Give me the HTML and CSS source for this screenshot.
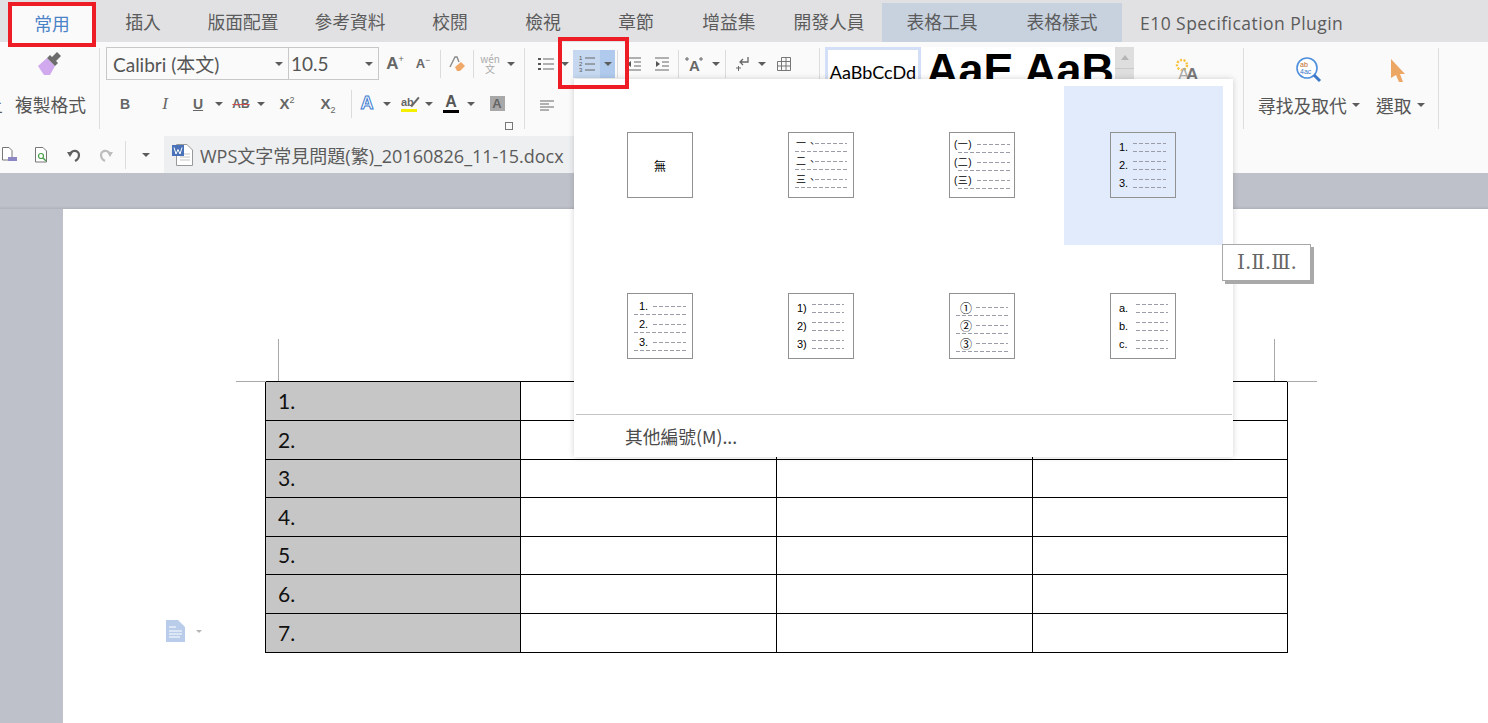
FILE: index.html
```html
<!DOCTYPE html>
<html lang="zh-Hant">
<head>
    <meta charset="UTF-8">
    <title>WPS文字常見問題</title>
    <link rel="stylesheet" href="styles.css">
</head>
<body>
    <div class="tabs">
        <div class="tab tab-home">常用</div>
        <div class="tab t94">插入</div>
        <div class="tab t106">版面配置</div>
        <div class="tab t108">參考資料</div>
        <div class="tab t92">校閱</div>
        <div class="tab t94">檢視</div>
        <div class="tab t92">章節</div>
        <div class="tab t94">增益集</div>
        <div class="tab t106">開發人員</div>
        <div class="tab t120 tab-table">表格工具</div>
        <div class="tab t120 tab-table">表格樣式</div>
        <div class="tab tab-plugin">E10 Specification Plugin</div>
    </div>

    <div class="ribbon">
        <!-- clipboard -->
        <div class="group g-clip">
            <svg class="brush" width="26" height="24" viewBox="0 0 26 24">
                <path d="M1 14 L10 6 L18 14 L13 23 L7 23 Z" fill="#d0a9ef"/>
                <path d="M10 6 L13 3 L15 5 L20 0 L24 4 L19 9 L21 11 L18 14 Z" fill="#6d6d6d"/>
            </svg>
            <div class="clip-label"><span class="clip-cut">上</span>複製格式</div>
        </div>

        <!-- font -->
        <div class="group g-font">
            <div class="font-row1">
                <div class="combo combo-name"><span>Calibri (本文)</span><i class="arrow"></i></div>
                <div class="combo combo-size"><span>10.5</span><i class="arrow"></i></div>
                <div class="tool tool-a">A<sup>+</sup></div>
                <div class="tool tool-a small">A<sup>−</sup></div>
                <i class="vsep"></i>
                <svg class="eraser" width="18" height="18" viewBox="0 0 18 18">
                    <path d="M2 12 L7 2 L9 2 L11 7" fill="none" stroke="#8a8a8a" stroke-width="1.4"/>
                    <path d="M7 12 L13 7 L17 11 L12 16 L9 16 Z" fill="#f0a868"/>
                </svg>
                <i class="vsep"></i>
                <div class="tool-wen"><span>wén</span><span>文</span></div>
                <i class="arrow"></i>
            </div>
            <div class="font-row2">
                <div class="tool fmt-b">B</div>
                <div class="tool fmt-i">I</div>
                <div class="tool fmt-u">U</div>
                <i class="arrow"></i>
                <div class="tool fmt-s">AB</div>
                <i class="arrow"></i>
                <div class="tool fmt-x">X<sup>2</sup></div>
                <div class="tool fmt-x">X<sub>2</sub></div>
                <i class="vsep short"></i>
                <div class="tool fmt-outline">A</div>
                <i class="arrow"></i>
                <div class="tool fmt-hl">ab</div>
                <i class="arrow"></i>
                <div class="tool fmt-color">A</div>
                <i class="arrow"></i>
                <div class="tool fmt-shade">A</div>
            </div>
            <i class="launcher"></i>
        </div>

        <!-- paragraph -->
        <div class="group g-para">
            <div class="para-row1">
                <svg width="16" height="14" viewBox="0 0 16 14">
                    <path d="M5 2 H16 M5 7 H16 M5 12 H16" stroke="#666" stroke-width="1"/>
                    <path d="M0 1 h3 v2 h-3 Z M0 6 h3 v2 h-3 Z M0 11 h3 v2 h-3 Z" fill="#555"/>
                </svg>
                <i class="arrow arrow-list"></i>
                <div class="num-btn">
                    <div class="num-main">
                        <svg width="16" height="18" viewBox="0 0 16 18">
                            <path d="M6 3 H16 M6 9 H16 M6 15 H16" stroke="#666" stroke-width="1"/>
                            <text x="0" y="5" class="mini">1</text>
                            <text x="0" y="11" class="mini">2</text>
                            <text x="0" y="17" class="mini">3</text>
                        </svg>
                    </div>
                    <div class="num-drop"><i class="arrow"></i></div>
                </div>
                <i class="vsep"></i>
                <svg width="14" height="14" viewBox="0 0 14 14">
                    <path d="M0 1 H14 M7 5 H14 M7 9 H14 M0 13 H14" stroke="#666" stroke-width="1"/>
                    <path d="M0 7 L4 4 V10 Z" fill="#555"/>
                </svg>
                <svg width="14" height="14" viewBox="0 0 14 14">
                    <path d="M0 1 H14 M7 5 H14 M7 9 H14 M0 13 H14" stroke="#666" stroke-width="1"/>
                    <path d="M5 7 L1 4 V10 Z" fill="#555"/>
                </svg>
                <i class="vsep"></i>
                <svg class="para-case" width="18" height="16" viewBox="0 0 18 16">
                    <text x="4" y="15" class="case-a">A</text>
                    <path d="M0 3 H4 M2 1 V5 M14 3 H18 M16 1 V5" stroke="#666"/>
                </svg>
                <i class="arrow arrow-case"></i>
                <i class="vsep"></i>
                <svg class="para-enter" width="14" height="16" viewBox="0 0 14 16">
                    <path d="M12 1 V6 H5 M7 3 L4 6 L7 9" fill="none" stroke="#666" stroke-width="1.3"/>
                    <path d="M0 12 H5 M2.5 10 V15" stroke="#666" stroke-width="1"/>
                </svg>
                <i class="arrow arrow-enter"></i>
                <svg width="14" height="14" viewBox="0 0 14 14">
                    <path d="M4.500 .5 H13.500 V13.500 H.5 V4.500 H13.500 M.5 9 H13.500 M4.500 .5 V13.500 M9 .5 V13.500" fill="none" stroke="#777"/>
                </svg>
            </div>
            <div class="para-row2">
                <svg width="14" height="12" viewBox="0 0 14 12">
                    <path d="M0 1 H14 M0 4 H9 M0 7 H14 M0 10 H9" stroke="#666"/>
                </svg>
            </div>
        </div>

        <!-- styles -->
        <div class="group g-style">
            <div class="style-first">AaBbCcDd</div>
            <div class="style-big">AaE</div>
            <div class="style-big style-next">AaB</div>
            <div class="style-scroll"><div class="scroll-up"><i class="arrow arrow-up"></i></div></div>
        </div>

        <div class="group g-new">
            <svg width="30" height="24" viewBox="0 0 30 24">
                <circle cx="7" cy="7" r="5" fill="none" stroke="#f8c23c" stroke-width="2.400" stroke-dasharray="2 1.500"/>
                <text x="3" y="22" class="aa aa-thin">A</text>
                <text x="11" y="22" class="aa">A</text>
            </svg>
        </div>

        <div class="group g-find">
            <div class="find-item find-replace">
                <svg width="26" height="26" viewBox="0 0 26 26">
                    <circle cx="11" cy="11" r="10" fill="#fff" stroke="#4f8fdc" stroke-width="1.600"/>
                    <path d="M18 18 L24 24" stroke="#3b78c8" stroke-width="3"/>
                    <text x="4" y="10" class="mini mini-or">ab</text>
                    <text x="4" y="17" class="mini mini-bl">4ac</text>
                </svg>
                <div class="find-label">尋找及取代<i class="arrow"></i></div>
            </div>
            <div class="find-item find-select">
                <svg width="16" height="24" viewBox="0 0 16 24">
                    <path d="M1 0 L15 15 L10 15 L13 23 L9 23 L6 16 L1 19 Z" fill="#eca765"/>
                </svg>
                <div class="find-label">選取<i class="arrow"></i></div>
            </div>
        </div>
    </div>

    <div class="quick">
        <svg width="16" height="16" viewBox="0 0 16 16">
            <path d="M.5 .5 H7 L10 3.500 V13 H.5 Z" fill="#fff" stroke="#777"/>
            <path d="M6 10 H15 V14 H6 Z" fill="#8d86c4"/>
        </svg>
        <svg width="16" height="16" viewBox="0 0 16 16">
            <path d="M1.500 .5 H9 L12.500 4 V15 H1.500 Z" fill="#fff" stroke="#777"/>
            <circle cx="7" cy="9" r="2.500" fill="none" stroke="#4aa04a" stroke-width="1.200"/>
            <path d="M9 11 L12 14" stroke="#4aa04a" stroke-width="1.400"/>
        </svg>
        <svg width="16" height="16" viewBox="0 0 16 16">
            <path d="M4 8 C4 3 13 2 13 8 C13 11 11 13 9 14" fill="none" stroke="#5f5f5f" stroke-width="2.200"/>
            <path d="M1 5 L7 5 L4 10 Z" fill="#5f5f5f"/>
        </svg>
        <svg width="16" height="16" viewBox="0 0 16 16">
            <path d="M12 8 C12 3 3 2 3 8 C3 11 5 13 7 14" fill="none" stroke="#bdbdbd" stroke-width="2.200"/>
            <path d="M15 5 L9 5 L12 10 Z" fill="#bdbdbd"/>
        </svg>
        <i class="vsep quick-sep"></i>
        <i class="arrow"></i>
        <div class="doc-tab">
            <svg width="21" height="22" viewBox="0 0 21 22">
                <path d="M4.500 .5 H15 L20.500 6 V21.500 H4.500 Z" fill="#fff" stroke="#999"/>
                <path d="M8 10 H18 M8 13 H18 M8 16 H18" stroke="#c4c4c4"/>
                <rect x="0" y="1" width="12" height="11" fill="#4a72b8"/>
                <path d="M2 3.500 L4 10 L6 5.500 L8 10 L10 3.500" fill="none" stroke="#fff"/>
            </svg>
            <span>WPS文字常見問題(繁)_20160826_11-15.docx</span>
        </div>
    </div>

    <div class="workspace">
        <div class="page">
            <i class="crop crop-v crop-tl"></i>
            <i class="crop crop-h crop-hl"></i>
            <i class="crop crop-v crop-tr"></i>
            <i class="crop crop-h crop-hr"></i>
            <div class="side-note">
                <svg width="20" height="22" viewBox="0 0 20 22">
                    <path d="M0 0 H12 L19 7 V22 H0 Z" fill="#b9cdea"/>
                    <path d="M3 7 H10 M3 11 H16 M3 14 H16 M3 17 H14" stroke="#fff" stroke-width="1.200"/>
                </svg>
                <i class="arrow arrow-note"></i>
            </div>
            <table class="doc-table">
                <tr><td>1.</td><td></td><td></td><td></td></tr>
                <tr><td>2.</td><td></td><td></td><td></td></tr>
                <tr><td>3.</td><td></td><td></td><td></td></tr>
                <tr><td>4.</td><td></td><td></td><td></td></tr>
                <tr><td>5.</td><td></td><td></td><td></td></tr>
                <tr><td>6.</td><td></td><td></td><td></td></tr>
                <tr><td>7.</td><td></td><td></td><td></td></tr>
            </table>
        </div>
    </div>

    <!-- numbering dropdown -->
    <div class="popup">
        <div class="cells">
            <div class="cell">
                <div class="thumb thumb-none">無</div>
            </div>
            <div class="cell">
                <div class="thumb t-cn">
                    <div class="tr"><span class="lb">一、</span><i class="dash d1"></i></div><i class="dash d2"></i>
                    <div class="tr"><span class="lb">二、</span><i class="dash d1"></i></div><i class="dash d2"></i>
                    <div class="tr"><span class="lb">三、</span><i class="dash d1"></i></div><i class="dash d2"></i>
                </div>
            </div>
            <div class="cell">
                <div class="thumb t-paren">
                    <div class="tr"><span class="lb">(一)</span><i class="dash d1"></i></div><i class="dash d2"></i>
                    <div class="tr"><span class="lb">(二)</span><i class="dash d1"></i></div><i class="dash d2"></i>
                    <div class="tr"><span class="lb">(三)</span><i class="dash d1"></i></div><i class="dash d2"></i>
                </div>
            </div>
            <div class="cell cell-on">
                <div class="thumb t-num">
                    <div class="tr"><span class="lb">1.</span><i class="dash d1"></i></div><i class="dash d2"></i>
                    <div class="tr"><span class="lb">2.</span><i class="dash d1"></i></div><i class="dash d2"></i>
                    <div class="tr"><span class="lb">3.</span><i class="dash d1"></i></div><i class="dash d2"></i>
                </div>
            </div>
            <div class="cell">
                <div class="thumb t-numw">
                    <div class="tr"><span class="lb">1.</span><i class="dash d1"></i></div><i class="dash d2"></i>
                    <div class="tr"><span class="lb">2.</span><i class="dash d1"></i></div><i class="dash d2"></i>
                    <div class="tr"><span class="lb">3.</span><i class="dash d1"></i></div><i class="dash d2"></i>
                </div>
            </div>
            <div class="cell">
                <div class="thumb t-close">
                    <div class="tr"><span class="lb">1)</span><i class="dash d1"></i></div><i class="dash d2"></i>
                    <div class="tr"><span class="lb">2)</span><i class="dash d1"></i></div><i class="dash d2"></i>
                    <div class="tr"><span class="lb">3)</span><i class="dash d1"></i></div><i class="dash d2"></i>
                </div>
            </div>
            <div class="cell">
                <div class="thumb t-circle">
                    <div class="tr"><span class="lb">①</span><i class="dash d1"></i></div><i class="dash d2"></i>
                    <div class="tr"><span class="lb">②</span><i class="dash d1"></i></div><i class="dash d2"></i>
                    <div class="tr"><span class="lb">③</span><i class="dash d1"></i></div><i class="dash d2"></i>
                </div>
            </div>
            <div class="cell">
                <div class="thumb t-alpha">
                    <div class="tr"><span class="lb">a.</span><i class="dash d1"></i></div><i class="dash d2"></i>
                    <div class="tr"><span class="lb">b.</span><i class="dash d1"></i></div><i class="dash d2"></i>
                    <div class="tr"><span class="lb">c.</span><i class="dash d1"></i></div><i class="dash d2"></i>
                </div>
            </div>
        </div>
        <div class="popup-more">其他編號(M)...</div>
    </div>

    <div class="tooltip">Ⅰ.Ⅱ.Ⅲ.</div>
    <div class="mark mark-num"></div>
</body>
</html>
```

FILE: styles.css
```css
* {
    box-sizing: border-box;
}
html, body {
    height: 100%;
}
body {
    margin: 0;
    overflow: hidden;
    position: relative;
    background: #bfc1ca;
    color: #555;
    font-family: "Noto Sans CJK TC", "Noto Sans", sans-serif;
}
i {
    display: block;
    font-style: normal;
}

/* shared bits */
.arrow {
    width: 0;
    height: 0;
    flex: none;
    border-left: 4px solid transparent;
    border-right: 4px solid transparent;
    border-top: 4px solid #5c5c5c;
}
.arrow-up {
    border-top: 0;
    border-bottom: 5px solid #b5b5b5;
}
.vsep {
    width: 1px;
    height: 28px;
    flex: none;
    background: #dcdcdc;
}
.mini {
    font-family: "Liberation Sans", sans-serif;
    font-size: 6px;
    fill: #555;
}
.mini-or {
    font-size: 7px;
    fill: #c0672a;
}
.mini-bl {
    font-size: 7px;
    fill: #3b78c8;
}

/* tab strip */
.tabs {
    display: flex;
    height: 42px;
    padding-left: 8px;
    background: #e1e1e3;
}
.tab {
    display: flex;
    align-items: center;
    justify-content: center;
    font-size: 17.750px;
    color: #5b5b5b;
}
.t92 { width: 92px; }
.t94 { width: 94px; }
.t106 { width: 106px; }
.t108 { width: 108px; }
.t120 { width: 120px; }
.tab-home {
    width: 88px;
    height: 45px;
    margin-top: 2px;
    padding-bottom: 3px;
    background: #fafafa;
    border: 4px solid #ee1c25;
    color: #4a82c8;
    position: relative;
    z-index: 3;
}
.tab-table {
    height: 39px;
    margin-top: 3px;
    padding-bottom: 3px;
    background: #c8d2df;
}
.tab-plugin {
    padding: 3px 0 0 18px;
    font-family: "Open Sans", sans-serif;
    font-size: 17.500px;
    letter-spacing: 0.450px;
}

/* ribbon */
.ribbon {
    display: flex;
    height: 94px;
    background: #fafafa;
}
.group {
    flex: none;
    height: 81px;
    margin-top: 6px;
    position: relative;
}
.g-clip {
    width: 100px;
    border-right: 1px solid #dedede;
    display: flex;
    flex-direction: column;
    align-items: center;
}
.brush {
    margin: 4px 0 0 1px;
}
.clip-label {
    width: 99px;
    margin-top: 16px;
    font-size: 17.750px;
    line-height: 24px;
    white-space: nowrap;
    overflow: hidden;
    padding-left: 15px;
    position: relative;
}
.clip-cut {
    position: absolute;
    left: -15px;
}

.g-font {
    width: 425px;
    padding-left: 6px;
    border-right: 1px solid #dedede;
}
.font-row1 {
    display: flex;
    align-items: center;
    height: 33px;
    margin-top: -1px;
}
.combo {
    display: flex;
    align-items: center;
    justify-content: space-between;
    height: 33px;
    padding: 0 5px 0 6px;
    border: 1px solid #c8c8c8;
    font-family: Lato, "Noto Sans CJK TC", sans-serif;
    font-size: 19px;
    color: #555;
}
.combo-name {
    width: 183px;
}
.combo-size {
    width: 91px;
    margin-left: -1px;
    padding-left: 2px;
}
.tool {
    font-family: "Liberation Sans", sans-serif;
    font-weight: 700;
    color: #666;
}
.tool sup, .tool sub {
    font-size: 9px;
    font-weight: 400;
    line-height: 0;
}
.tool-a {
    width: 28px;
    font-size: 17px;
    text-align: center;
    margin-left: 2px;
    margin-right: -2px;
}
.tool-a.small {
    font-size: 13px;
    margin-right: -1px;
}
.font-row1 .vsep {
    margin: 0 7px 0 4px;
}
.eraser {
    margin-right: 3px;
}
.tool-wen {
    width: 28px;
    display: flex;
    flex-direction: column;
    align-items: center;
    margin: 0 3px 0 -5px;
    font-size: 10px;
    line-height: 10px;
    color: #aaa;
}
.font-row2 {
    display: grid;
    grid-template-columns: 38px 42px 24px 18px 26px 14px 38px 44px 3px 28px 12px 32px 8px 36px 4px 48px;
    place-items: center;
    height: 33px;
    margin-top: 7px;
}
.fmt-b { font-size: 14px; }
.fmt-i {
    font-family: "Liberation Serif", serif;
    font-style: italic;
    font-weight: 400;
    font-size: 17px;
}
.fmt-u {
    font-size: 14px;
    text-decoration: underline;
}
.fmt-s {
    font-size: 12px;
    text-decoration: line-through;
    text-decoration-color: #d05050;
}
.fmt-x { font-size: 15px; }
.fmt-outline {
    font-size: 18px;
    color: #fff;
    -webkit-text-stroke: 1px #3d7bd0;
}
.fmt-hl {
    position: relative;
    width: 16px;
    padding-right: 4px;
    font-size: 11px;
    line-height: 13px;
    text-align: center;
    border-bottom: 3px solid #f6f000;
}
.fmt-hl::after {
    content: "";
    position: absolute;
    right: 1px;
    top: 0;
    width: 2px;
    height: 12px;
    background: #666;
    transform: rotate(40deg);
}
.fmt-color {
    width: 16px;
    font-size: 16px;
    line-height: 16px;
    text-align: center;
    color: #555;
    border-bottom: 3px solid #000;
}
.fmt-shade {
    width: 15px;
    height: 15px;
    font-size: 13px;
    line-height: 15px;
    text-align: center;
    background: #a8a8a8;
    color: #666;
}
.launcher {
    position: absolute;
    left: 405px;
    top: 74px;
    width: 8px;
    height: 8px;
    border: 1px solid #777;
}

.g-para {
    width: 295px;
    border-right: 1px solid #dedede;
    padding-left: 13px;
}
.para-row1 {
    display: flex;
    align-items: center;
    height: 28px;
    margin-top: 2px;
}
.arrow-list {
    margin: 0 4px 0 7px;
}
.num-btn {
    display: flex;
    width: 42px;
    height: 28px;
    flex: none;
    margin-left: 0;
}
.num-main {
    width: 27px;
    background: #c5d8f0;
    display: flex;
    align-items: center;
    justify-content: center;
}
.num-drop {
    width: 15px;
    background: #afcaec;
    display: flex;
    align-items: center;
    justify-content: center;
}
.para-row1 > .vsep {
    margin: 0 9px;
}
.para-row1 > .num-btn + .vsep {
    margin-left: 2px;
}
.para-row1 > .arrow-case + .vsep {
    margin-left: 0;
}
.para-row1 > svg + svg {
    margin-left: 14px;
}
.para-case {
    margin-left: -3px;
}
.case-a {
    font-family: "Liberation Sans", sans-serif;
    font-weight: 700;
    font-size: 15px;
    fill: #666;
}
.arrow-case {
    margin: 0 5px 0 9px;
}
.para-enter {
    margin-left: 1px;
}
.arrow-enter {
    margin: 0 11px 0 8px;
}
.para-row2 {
    margin-top: 15px;
    padding-left: 2px;
}

.g-style {
    width: 315px;
    margin-top: 5px;
    display: flex;
    padding-left: 5px;
    overflow: hidden;
}
.style-first {
    width: 96px;
    height: 40px;
    flex: none;
    padding-top: 11px;
    background: #fff;
    border: 3px solid #d3dff6;
    border-bottom: 0;
    font-family: Lato, sans-serif;
    font-size: 18px;
    line-height: 22px;
    text-align: center;
    color: #000;
    white-space: nowrap;
}
.style-big {
    width: 97px;
    height: 40px;
    flex: none;
    padding-left: 5px;
    background: #fff;
    font-family: "Liberation Sans", sans-serif;
    font-weight: 700;
    font-size: 45px;
    line-height: 46px;
    color: #000;
    overflow: hidden;
}
.style-next {
    padding-left: 6px;
}
.style-scroll {
    width: 19px;
    height: 40px;
    flex: none;
    background: #dedede;
}
.scroll-up {
    height: 22px;
    border-bottom: 1px solid #c9c9c9;
    display: flex;
    align-items: center;
    justify-content: center;
}

.g-new {
    width: 109px;
    border-right: 1px solid #dedede;
    padding: 10px 0 0 40px;
}
.aa {
    font-family: "Liberation Sans", sans-serif;
    font-size: 17px;
    font-weight: 700;
    fill: #777;
}
.aa-thin {
    font-weight: 400;
    fill: #aaa;
}
.g-find {
    width: 195px;
    display: flex;
    padding-left: 14px;
    border-right: 1px solid #dedede;
}
.find-item {
    display: flex;
    flex-direction: column;
    align-items: center;
}
.find-replace {
    width: 105px;
}
.find-replace svg {
    margin: 9px 0 0 -3px;
}
.find-select {
    width: 50px;
    margin-left: 13px;
}
.find-select svg {
    margin: 11px 0 0 -7px;
}
.find-label {
    display: flex;
    align-items: center;
    gap: 5px;
    position: absolute;
    top: 45px;
    font-size: 17.750px;
    line-height: 24px;
    white-space: nowrap;
}
.find-replace .find-label { left: 14px; }
.find-select .find-label { left: 132px; }

/* quick access row */
.quick {
    display: flex;
    align-items: center;
    gap: 16px;
    height: 37px;
    padding-left: 2px;
    background: #fafafa;
}
.quick-sep {
    margin-left: -5px;
}
.doc-tab {
    display: flex;
    align-items: center;
    gap: 7px;
    width: 410px;
    height: 37px;
    margin-left: -2px;
    padding-left: 8px;
    background: #eeeff0;
    font-family: "Open Sans", "Noto Sans CJK TC", sans-serif;
    font-size: 18px;
    color: #5b5b5b;
    white-space: nowrap;
}

/* document */
.workspace {
    height: 550px;
    padding: 36px 0 0 63px;
    background: linear-gradient(#bfc1ca 33px, #b0b2bb 36px, #bfc1ca 36px);
}
.page {
    position: relative;
    height: 514px;
    padding: 172px 0 0 202px;
    background: #fff;
}
.crop {
    position: absolute;
    background: #a9a9a9;
}
.crop-v {
    width: 1px;
    height: 42px;
    top: 130px;
}
.crop-h {
    height: 1px;
    width: 30px;
    top: 172px;
}
.crop-tl { left: 215px; }
.crop-tr { left: 1211px; }
.crop-hl { left: 173px; }
.crop-hr { left: 1224px; }
.side-note {
    position: absolute;
    left: 103px;
    top: 411px;
    display: flex;
    align-items: center;
    gap: 10px;
}
.arrow-note {
    border-top-color: #b5b5b5;
    border-left-width: 3px;
    border-right-width: 3px;
    border-top-width: 3px;
}
.doc-table {
    width: 1023px;
    table-layout: fixed;
    border-collapse: collapse;
    font-family: Lato, sans-serif;
    font-size: 21px;
    color: #111;
}
.doc-table tr {
    height: 39px;
}
.doc-table tr:nth-child(3), .doc-table tr:nth-child(5) {
    height: 38px;
}
.doc-table td {
    width: 256px;
    padding: 0 0 2px 12px;
    border: 1px solid #000;
}
.doc-table td:first-child {
    width: 255px;
    background: #c6c6c6;
}
.doc-table td:last-child {
    width: 255px;
}

/* numbering popup */
.popup {
    position: absolute;
    left: 574px;
    top: 79px;
    width: 659px;
    height: 378px;
    padding: 7px 0 0 7px;
    background: #fff;
    box-shadow: 0 0 6px rgba(0, 0, 0, 0.18);
}
.cells {
    display: grid;
    grid-template-columns: repeat(4, 159px);
    grid-auto-rows: 159px;
    gap: 2px;
}
.cell {
    padding: 46px 0 0 46px;
}
.cell-on {
    background: #e2ebfc;
}
.thumb {
    width: 66px;
    height: 66px;
    padding-top: var(--top);
    border: 1px solid #919191;
    background: #fff;
    font-family: "Liberation Sans", "Noto Sans CJK TC", sans-serif;
    font-size: 11px;
    color: #000;
}
.cell-on .thumb {
    background: #e2ebfc;
}
.thumb-none {
    display: flex;
    align-items: center;
    justify-content: center;
    padding: 0;
    font-family: "Noto Sans CJK TC", sans-serif;
    font-size: 12px;
}
.tr {
    display: flex;
    height: 1px;
}
.lb {
    width: var(--d1);
    flex: none;
    padding-left: var(--lb);
    line-height: 1px;
    white-space: nowrap;
}
.dash {
    height: 1px;
    background: repeating-linear-gradient(90deg, #9a9ca8 0 4px, transparent 4px 6px);
}
.d1 {
    width: calc(var(--end) - var(--d1));
}
.d2 {
    margin: 7px 0 9px var(--d2);
    width: calc(var(--end) - var(--d2));
}
/* offsets inside the thumbnails, measured from inside the 1px border */
.t-cn { --top: 10px; --d1: 26px; --d2: 6px; --end: 58px; --lb: 7px; }
.t-paren { --top: 11px; --d1: 27px; --d2: 8px; --end: 60px; --lb: 4px; }
.t-num { --top: 10px; --d1: 22px; --d2: 22px; --end: 55px; --lb: 8px; }
.t-numw { --top: 12px; --d1: 25px; --d2: 6px; --end: 58px; --lb: 11px; }
.t-close { --top: 10px; --d1: 23px; --d2: 23px; --end: 55px; --lb: 8px; }
.t-circle { --top: 13px; --d1: 26px; --d2: 6px; --end: 58px; --lb: 10px; }
.t-alpha { --top: 10px; --d1: 25px; --d2: 25px; --end: 57px; --lb: 8px; }
.t-num .lb, .t-close .lb, .t-alpha .lb {
    padding-top: 4px;
}
.t-cn .lb {
    font-size: 10px;
    letter-spacing: 1px;
}
.t-paren .lb {
    font-size: 10px;
    letter-spacing: 0.500px;
}
.t-circle .lb {
    font-family: "Noto Sans CJK TC", sans-serif;
    font-size: 12px;
}
.popup-more {
    margin: 8px 1px 0 -5px;
    padding: 9px 0 0 49px;
    border-top: 1px solid #c4c4c4;
    font-size: 17.750px;
    line-height: 24px;
    color: #4a4a4a;
}

/* tooltip and the red marks drawn on the screenshot */
.tooltip {
    position: absolute;
    left: 1222px;
    top: 244px;
    width: 89px;
    height: 37px;
    padding-left: 14px;
    border: 1px solid #a8a8a8;
    background: #fff;
    box-shadow: 3px 3px 0 #a9a9a9;
    font-family: "DejaVu Serif", serif;
    font-size: 20px;
    line-height: 35px;
    color: #666;
    white-space: nowrap;
}
.mark {
    position: absolute;
    border: 4px solid #ee1c25;
}
.mark-num {
    left: 558px;
    top: 37px;
    width: 71px;
    height: 52px;
}
```
